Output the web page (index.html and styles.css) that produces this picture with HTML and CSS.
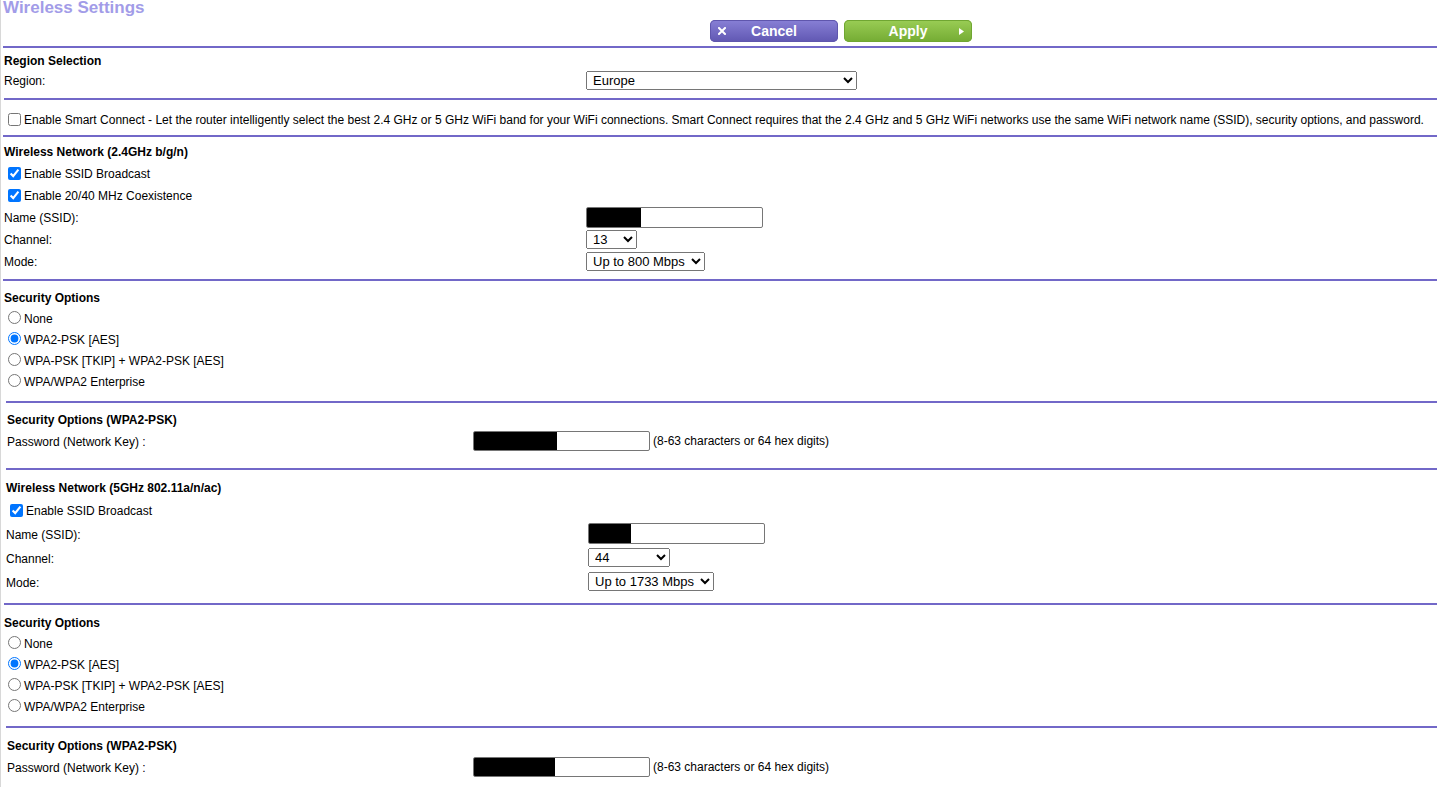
FILE: index.html
```html
<!DOCTYPE html>
<html lang="en">
<head>
<meta charset="utf-8">
<title>Wireless Settings</title>
<link rel="stylesheet" href="styles.css">
</head>
<body>
<div class="page">
  <header class="top">
    <h1 class="title">Wireless Settings</h1>
    <div class="actions">
      <button class="btn cancel" type="button">
        <span class="btn-icon"><svg width="8" height="8" viewBox="0 0 8 8"><path d="M1 1L7 7M7 1L1 7" stroke="#fff" stroke-width="2" stroke-linecap="square"/></svg></span>
        <span class="btn-text">Cancel</span>
        <span class="btn-icon"></span>
      </button>
      <button class="btn apply" type="button">
        <span class="btn-icon"></span>
        <span class="btn-text">Apply</span>
        <span class="btn-icon right"><svg width="5" height="7" viewBox="0 0 5 7"><path d="M0 0L5 3.5L0 7Z" fill="#fff"/></svg></span>
      </button>
    </div>
  </header>

  <div class="rule r2"></div>
  <section class="sec sec-a">
    <div class="row h20 head">Region Selection</div>
    <div class="row h20">
      <span class="lbl">Region:</span>
      <select class="sel w-region"><option>Europe</option></select>
    </div>
  </section>

  <div class="rule r3"></div>
  <section class="sec sec-b">
    <label class="row h20"><input type="checkbox" class="cb"><span class="tx">Enable Smart Connect - Let the router intelligently select the best 2.4 GHz or 5 GHz WiFi band for your WiFi connections. Smart Connect requires that the 2.4 GHz and 5 GHz WiFi networks use the same WiFi network name (SSID), security options, and password.</span></label>
  </section>

  <div class="rule r2"></div>
  <section class="sec sec-c">
    <div class="row h22 head">Wireless Network (2.4GHz b/g/n)</div>
    <label class="row h22"><input type="checkbox" class="cb" checked><span class="tx">Enable SSID Broadcast</span></label>
    <label class="row h22"><input type="checkbox" class="cb" checked><span class="tx">Enable 20/40 MHz Coexistence</span></label>
    <div class="row h22">
      <span class="lbl">Name (SSID):</span>
      <input type="text" class="txt t21 m54" readonly>
    </div>
    <div class="row h22">
      <span class="lbl">Channel:</span>
      <select class="sel w-ch24"><option>13</option></select>
    </div>
    <div class="row h22">
      <span class="lbl">Mode:</span>
      <select class="sel w-mode24"><option>Up to 800 Mbps</option></select>
    </div>
  </section>

  <div class="rule r2"></div>
  <section class="sec sec-d">
    <div class="row h21 head">Security Options</div>
    <label class="row h21"><input type="radio" name="sec24" class="rb"><span class="tx">None</span></label>
    <label class="row h21"><input type="radio" name="sec24" class="rb" checked><span class="tx">WPA2-PSK [AES]</span></label>
    <label class="row h21"><input type="radio" name="sec24" class="rb"><span class="tx">WPA-PSK [TKIP] + WPA2-PSK [AES]</span></label>
    <label class="row h21"><input type="radio" name="sec24" class="rb"><span class="tx">WPA/WPA2 Enterprise</span></label>
  </section>

  <div class="rule r5"></div>
  <section class="sec sec-e">
    <div class="row h20 head">Security Options (WPA2-PSK)</div>
    <div class="row h24">
      <span class="lbl-pw">Password (Network Key) :</span>
      <input type="text" class="txt t20 m83" readonly>
      <span class="hint">(8-63 characters or 64 hex digits)</span>
    </div>
  </section>

  <div class="rule r5"></div>
  <section class="sec sec-f">
    <div class="row h22 head">Wireless Network (5GHz 802.11a/n/ac)</div>
    <label class="row h24"><input type="checkbox" class="cb" checked><span class="tx">Enable SSID Broadcast</span></label>
    <div class="row h23">
      <span class="lbl">Name (SSID):</span>
      <input type="text" class="txt t21 m42" readonly>
    </div>
    <div class="row h25">
      <span class="lbl">Channel:</span>
      <select class="sel w-ch5"><option>44</option></select>
    </div>
    <div class="row h23">
      <span class="lbl">Mode:</span>
      <select class="sel w-mode5"><option>Up to 1733 Mbps</option></select>
    </div>
  </section>

  <div class="rule r3"></div>
  <section class="sec sec-g">
    <div class="row h21 head">Security Options</div>
    <label class="row h21"><input type="radio" name="sec5" class="rb"><span class="tx">None</span></label>
    <label class="row h21"><input type="radio" name="sec5" class="rb" checked><span class="tx">WPA2-PSK [AES]</span></label>
    <label class="row h21"><input type="radio" name="sec5" class="rb"><span class="tx">WPA-PSK [TKIP] + WPA2-PSK [AES]</span></label>
    <label class="row h21"><input type="radio" name="sec5" class="rb"><span class="tx">WPA/WPA2 Enterprise</span></label>
  </section>

  <div class="rule r5"></div>
  <section class="sec sec-h">
    <div class="row h20 head">Security Options (WPA2-PSK)</div>
    <div class="row h24">
      <span class="lbl-pw">Password (Network Key) :</span>
      <input type="text" class="txt t20 m81" readonly>
      <span class="hint">(8-63 characters or 64 hex digits)</span>
    </div>
  </section>
</div>
</body>
</html>
```
FILE: styles.css
```css
html, body {
  margin: 0;
  padding: 0;
  background: #fff;
}
body {
  font-family: "Liberation Sans", Arial, sans-serif;
  font-size: 12px;
  color: #000;
}
.page {
  border-left: 1px solid #d8d8d8;
  min-height: 787px;
  box-sizing: border-box;
  overflow: hidden;
}

/* header */
.top {
  height: 46px;
}
.title {
  margin: 0 0 0 2px;
  font-size: 17px;
  line-height: 16px;
  font-weight: bold;
  color: #a29ce8;
  white-space: nowrap;
}
.actions {
  display: flex;
  gap: 6px;
  margin: 4px 0 0 709px;
}
.btn {
  width: 128px;
  height: 22px;
  border: 0;
  border-radius: 5px;
  padding: 0 8px;
  display: flex;
  align-items: center;
  font-family: "Liberation Sans", Arial, sans-serif;
  font-size: 14px;
  font-weight: bold;
  color: #fff;
  box-sizing: border-box;
}
.btn-icon {
  width: 9px;
  flex: none;
  display: flex;
  align-items: center;
}
.btn-icon.right {
  justify-content: flex-end;
}
.btn-text {
  flex: 1;
  text-align: center;
}
.cancel {
  background: linear-gradient(#8880d6, #6057b2);
  box-shadow: inset 0 0 0 1px #5f56ad;
}
.apply {
  background: linear-gradient(#9acd55, #74ab33);
  box-shadow: inset 0 0 0 1px #70a632;
}

/* rules */
.rule {
  height: 2px;
  background: #7268c8;
}
.r2 { margin-left: 2px; }
.r3 { margin-left: 3px; }
.r5 { margin-left: 5px; }

/* sections */
.sec {
  padding-left: 3px;
}
.sec-a { padding-top: 2px; padding-bottom: 8px; }
.sec-b { padding-top: 9px; padding-bottom: 6px; }
.sec-c { padding-top: 3px; padding-bottom: 7px; }
.sec-d { padding-top: 5px; padding-bottom: 10px; }
.sec-e { padding-top: 6px; padding-bottom: 15px; padding-left: 6px; }
.sec-f { padding-top: 6px; padding-bottom: 10px; padding-left: 5px; }
.sec-g { padding-top: 6px; padding-bottom: 10px; }
.sec-h { padding-top: 7px; padding-bottom: 4px; padding-left: 6px; }

.row {
  display: flex;
  align-items: center;
  white-space: nowrap;
  box-sizing: border-box;
}
.h20 { height: 20px; }
.h21 { height: 21px; }
.h22 { height: 22px; }
.h23 { height: 23px; }
.h24 { height: 24px; }
.h25 { height: 25px; }

.head {
  font-weight: bold;
  padding-top: 2px;
}
.lbl {
  width: 582px;
  flex: none;
  padding-top: 2px;
}
.lbl-pw {
  width: 466px;
  flex: none;
  padding-top: 2px;
}
.tx {
  padding-top: 2px;
}
.hint {
  margin-left: 3px;
}

/* controls */
.cb, .rb {
  width: 13px;
  height: 13px;
  margin: 0 3px 0 4px;
  flex: none;
}
.sel {
  height: 19px;
  font-family: "Liberation Sans", Arial, sans-serif;
  font-size: 13px;
  color: #000;
  padding: 0 0 0 2px;
  box-sizing: border-box;
}
.w-region { width: 271px; }
.w-ch24 { width: 51px; }
.w-mode24 { width: 119px; }
.w-ch5 { width: 82px; }
.w-mode5 { width: 126px; }

.txt {
  width: 177px;
  box-sizing: border-box;
  border: 1px solid #767676;
  border-radius: 2px;
  padding: 0;
  margin: 0;
  outline: none;
}
.t21 { height: 21px; }
.t20 { height: 20px; }
.m54 { background: linear-gradient(90deg, #000 0 54px, #fff 54px); }
.m42 { background: linear-gradient(90deg, #000 0 42px, #fff 42px); }
.m83 { background: linear-gradient(90deg, #000 0 83px, #fff 83px); }
.m81 { background: linear-gradient(90deg, #000 0 81px, #fff 81px); }
```
